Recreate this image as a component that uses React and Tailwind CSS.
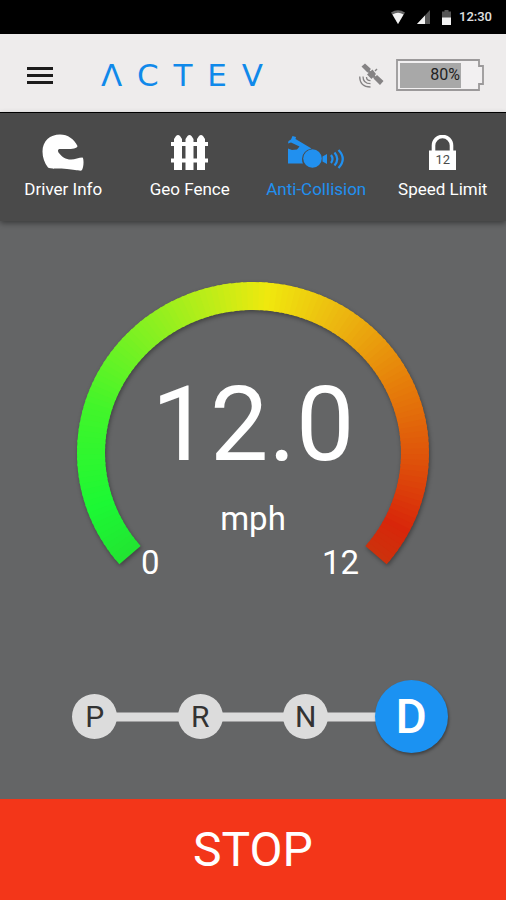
import { useState } from 'react';

const gaugeStops = [
  [0, [34, 228, 50]],
  [0.08, [28, 248, 52]],
  [0.22, [66, 245, 42]],
  [0.36, [140, 240, 32]],
  [0.46, [200, 236, 22]],
  [0.52, [240, 232, 14]],
  [0.62, [236, 184, 16]],
  [0.74, [230, 128, 10]],
  [0.86, [222, 80, 10]],
  [0.95, [216, 38, 10]],
  [1, [204, 50, 12]],
];

const colorAt = (t) => {
  const i = Math.max(1, gaugeStops.findIndex(([stop]) => t <= stop));
  const [t0, from] = gaugeStops[i - 1];
  const [t1, to] = gaugeStops[i];
  const k = (t - t0) / (t1 - t0);
  return `rgb(${from.map((c, n) => Math.round(c + (to[n] - c) * k)).join(',')})`;
};

// t runs from 0 (lower left) to 1 (lower right), clockwise
const pointAt = (t, rx, ry) => {
  const angle = ((139.4 + t * 261.2) * Math.PI) / 180;
  return `${(177 + rx * Math.cos(angle)).toFixed(2)},${(172 + ry * Math.sin(angle)).toFixed(2)}`;
};

const SEGMENTS = 130;

const GaugeArc = () => (
  <svg
    viewBox="0 0 354 300"
    className="w-full overflow-visible drop-shadow-[1px_2px_2px_rgba(0,0,0,0.35)]"
    aria-hidden="true"
  >
    {Array.from({ length: SEGMENTS }, (_, i) => {
      const a = i / SEGMENTS;
      const b = Math.min(1, (i + 1.4) / SEGMENTS);
      return (
        <polygon
          key={i}
          fill={colorAt((i + 0.5) / SEGMENTS)}
          points={`${pointAt(a, 176, 171)} ${pointAt(b, 176, 171)} ${pointAt(b, 148, 143)} ${pointAt(a, 148, 143)}`}
        />
      );
    })}
  </svg>
);

const HelmetIcon = () => (
  <svg width="42" height="37" viewBox="0 0 42 37" fill="currentColor">
    <path d="M6 33.5C2.5 29 .5 23.500 .5 17.500C.5 7 8 .5 18 .5C26 .5 32 5 35.500 12C35.500 14.500 30 15 25 15H18C16 15 15.500 16.500 16.500 18.500C20 23 23.500 25.500 29 25.500C33 25.500 37 23.500 40.500 23.500C42 24 42 34 39.500 36.500C38 37.200 32 35.500 25 35C18 34.500 7.500 35 6 33.500Z" />
  </svg>
);

const FenceIcon = () => (
  <svg width="37" height="35" viewBox="0 0 37 35" fill="currentColor">
    <path d="M3 4L5 1Q7 -1 9 1L11 4V35H3ZM14.500 4L16.500 1Q18.500 -1 20.500 1L22.500 4V35H14.500ZM26 4L28 1Q30 -1 32 1L34 4V35H26Z" />
    <path d="M0 7H37V11H0ZM0 23.500H37V27.500H0Z" />
  </svg>
);

const CollisionIcon = () => (
  <svg width="57" height="33" viewBox="0 0 57 33" fill="currentColor">
    <path d="M4.500 0L8 1L7.500 3L23.500 12.500Q14 15 14 23Q14 26 15 27.500H0V12.500L4 14L9 13.500L11.500 10.500L3 6.500L0 7.500L.5 5L3 3.500Z" />
    <circle cx="24.500" cy="22.500" r="9.300" />
    <path d="M34.500 20.500L39 18V28L34.500 25.500Z" />
    <g fill="none" stroke="currentColor" strokeWidth="2.200">
      <path d="M43 19Q46 23 43 27" />
      <path d="M46.500 16.500Q52 23 46.500 29.500" />
      <path d="M50.500 14Q59 23 50.500 32" />
    </g>
  </svg>
);

const LockIcon = () => (
  <span className="relative block">
    <svg width="27" height="35" viewBox="0 0 27 35">
      <path d="M4.500 17V10.500A9 9 0 0 1 22.500 10.500V17" fill="none" stroke="currentColor" strokeWidth="3.600" />
      <path d="M0 15.500H27V35H0Z" fill="currentColor" />
    </svg>
    <span className="absolute inset-x-0 bottom-1 text-center text-[13px] leading-3 text-[#4a4a4a]">12</span>
  </span>
);

const SatelliteIcon = () => (
  <svg width="25" height="25" viewBox="0 0 25 25" fill="#858384" aria-hidden="true">
    <path d="M2.500 3.500L6 .5L12 6L8.500 9.500ZM14.500 15.500L18 12L24.500 18L21 22ZM8 11.500L13.500 6.500L17 11L12.500 16Z" />
    <path d="M9.500 8L16 14.500" stroke="#858384" strokeWidth="2.500" />
    <path d="M16 8L18 6" stroke="#858384" strokeWidth="1.500" />
    <g fill="none" stroke="#858384" strokeWidth="1.300">
      <path d="M.7 13.500C.7 20 4 24 11.500 24" />
      <path d="M4 13.500C4 18 6.500 20.700 11.500 20.700" />
      <path d="M7.500 14C7.500 16.500 9 17.700 11.500 17.700" />
    </g>
  </svg>
);

const StatusBar = () => (
  <div className="flex h-[34px] items-center justify-end bg-black pr-[14px] text-[#e0e0e0]">
    <svg width="14" height="14" viewBox="0 0 14 14" className="mr-3" aria-hidden="true">
      <path d="M0 2.500Q7 -2 14 2.500L7 14Z" fill="#666" />
      <path d="M1.500 4.500Q7 1 12.500 4.500L7 14Z" fill="#f2f2f2" />
    </svg>
    <svg width="13" height="14" viewBox="0 0 13 14" className="mr-3" aria-hidden="true">
      <path d="M13 0V14H0Z" fill="#555" />
      <path d="M8 5.500V14H0Z" fill="#f2f2f2" />
    </svg>
    <svg width="9" height="15" viewBox="0 0 9 15" className="mr-2" aria-hidden="true">
      <path d="M0 1.500H2.500V0H6.500V1.500H9V15H0Z" fill="#555" />
      <path d="M0 7.500H9V15H0Z" fill="#f2f2f2" />
    </svg>
    <span className="text-[13px] font-medium">12:30</span>
  </div>
);

const Battery = ({ level }) => (
  <div className="relative h-8 w-[88px]">
    <svg width="88" height="32" viewBox="0 0 88 32" aria-hidden="true">
      <path d="M1 1H83V7H87V25H83V31H1Z" fill="#f2f0f1" stroke="#9b999a" strokeWidth="1.800" />
      <rect x="4" y="4" width={Math.round(76 * (level / 100))} height="25" fill="#a8a8a8" />
    </svg>
    <span className="absolute inset-y-0 right-6 flex items-center text-base text-[#222]">{level}%</span>
  </div>
);

const Header = () => (
  <header className="flex h-[79px] items-center border-b border-black bg-[#eeecec] pl-[27px] pr-[22px] pt-1">
    <button type="button" aria-label="Menu" className="flex w-[26px] flex-col gap-1">
      <span className="h-[3px] bg-[#1c1c1c]" />
      <span className="h-[3px] bg-[#1c1c1c]" />
      <span className="h-[3px] bg-[#1c1c1c]" />
    </button>
    <h1
      aria-label="ACTEV"
      className="ml-12 flex w-[162px] justify-between font-['DejaVu_Sans'] text-[31px] leading-8 text-[#1089ea]"
    >
      {['Λ', 'C', 'T', 'E', 'V'].map((letter) => (
        <span key={letter}>{letter}</span>
      ))}
    </h1>
    <div className="ml-auto flex items-center gap-3">
      <SatelliteIcon />
      <Battery level={80} />
    </div>
  </header>
);

const tabs = [
  { label: 'Driver Info', Icon: HelmetIcon },
  { label: 'Geo Fence', Icon: FenceIcon },
  { label: 'Anti-Collision', Icon: CollisionIcon },
  { label: 'Speed Limit', Icon: LockIcon },
];

const Tabs = () => {
  const [active, setActive] = useState('Anti-Collision');

  return (
    <nav className="relative grid h-[108px] grid-cols-4 bg-[#4a4a4a] shadow-[0_2px_6px_rgba(0,0,0,0.45)]">
      {tabs.map(({ label, Icon }) => (
        <button
          key={label}
          type="button"
          onClick={() => setActive(label)}
          className={`flex flex-col items-center pt-5 ${active === label ? 'text-[#2190ef]' : 'text-white'}`}
        >
          <span className="flex h-[38px] items-center">
            <Icon />
          </span>
          <span className="mt-2 whitespace-nowrap text-[17px] leading-5">{label}</span>
        </button>
      ))}
    </nav>
  );
};

const Gauge = () => (
  <section className="mx-auto grid w-[354px] max-w-full">
    <div className="col-start-1 row-start-1">
      <GaugeArc />
    </div>
    <div className="col-start-1 row-start-1 flex flex-col items-center pt-[92px] text-white">
      <p className="text-[104px] leading-none">12.0</p>
      <p className="mt-[26px] text-[33px] leading-8">mph</p>
      <div className="mt-3 flex w-full justify-between pl-[65px] pr-[71px] text-[33px] leading-8">
        <span>0</span>
        <span>12</span>
      </div>
    </div>
  </section>
);

const GearSelector = () => {
  const [gear, setGear] = useState('D');

  return (
    <div className="relative mx-auto mt-auto grid w-[422px] max-w-full grid-cols-4">
      <div className="absolute inset-x-[53px] top-1/2 h-[9px] -translate-y-1/2 bg-[#dcdcdc]" />
      {['P', 'R', 'N', 'D'].map((g) => (
        <div key={g} className="relative flex h-[73px] items-center justify-center">
          <button
            type="button"
            aria-pressed={gear === g}
            onClick={() => setGear(g)}
            className={
              gear === g
                ? 'size-[73px] rounded-full bg-[#1b92f2] text-5xl font-medium text-white shadow-[1px_2px_3px_rgba(0,0,0,0.35)]'
                : 'size-[45px] rounded-full bg-[#dcdcdc] text-[30px] leading-none text-[#333]'
            }
          >
            {g}
          </button>
        </div>
      ))}
    </div>
  );
};

const App = () => (
  <div className="flex min-h-screen flex-col bg-[#646566] font-['Roboto',sans-serif]">
    <StatusBar />
    <Header />
    <Tabs />
    <main className="flex flex-1 flex-col pb-[46px] pt-[60px]">
      <Gauge />
      <GearSelector />
    </main>
    <button type="button" className="h-[101px] w-full bg-[#f33619] text-5xl text-white">
      STOP
    </button>
  </div>
);

export default App;
